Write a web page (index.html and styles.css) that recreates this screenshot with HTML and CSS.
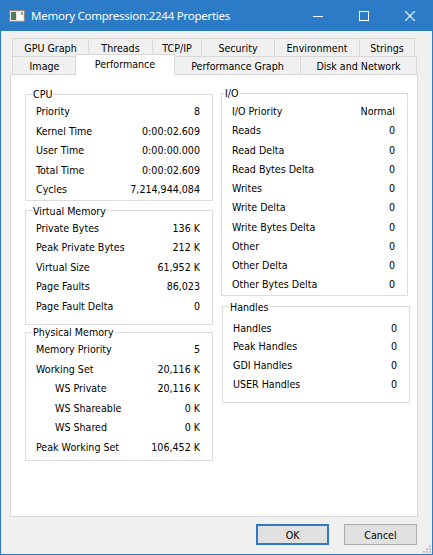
FILE: index.html
```html
<!DOCTYPE html>
<html>
<head>
<meta charset="utf-8">
<title>Memory Compression:2244 Properties</title>
<link rel="stylesheet" href="styles.css">
</head>
<body>
<div class="window">
  <div class="titlebar">
    <svg class="appicon" width="16" height="12" viewBox="0 0 16 12">
      <rect x="0.5" y="0.5" width="15" height="11" fill="#e6e6e6" stroke="#8a8a8a"/>
      <rect x="2" y="2" width="5" height="8" fill="#4d7a5c"/>
      <rect x="8" y="2" width="6" height="8" fill="#ffffff"/>
      <rect x="12" y="2" width="2" height="3" fill="#9c9c9c"/>
    </svg>
    <span class="title">Memory Compression:2244 Properties</span>
    <div class="caption-buttons">
      <span class="cbtn"><svg width="10" height="10" viewBox="0 0 10 10"><line x1="0" y1="5.5" x2="10" y2="5.5" stroke="#fff" stroke-width="1"/></svg></span>
      <span class="cbtn"><svg width="10" height="10" viewBox="0 0 10 10"><rect x="0.5" y="0.5" width="9" height="9" fill="none" stroke="#fff" stroke-width="1"/></svg></span>
      <span class="cbtn"><svg width="10" height="10" viewBox="0 0 10 10"><path d="M0 0 L10 10 M10 0 L0 10" stroke="#fff" stroke-width="1.1"/></svg></span>
    </div>
  </div>
  <div class="client">
    <div class="tabs">
      <div class="tabrow tabrow-back">
        <div class="tab">GPU Graph</div>
        <div class="tab">Threads</div>
        <div class="tab">TCP/IP</div>
        <div class="tab">Security</div>
        <div class="tab">Environment</div>
        <div class="tab">Strings</div>
      </div>
      <div class="tabrow tabrow-front">
        <div class="tab">Image</div>
        <div class="tab tab-active">Performance</div>
        <div class="tab">Performance Graph</div>
        <div class="tab">Disk and Network</div>
      </div>
    </div>
    <div class="panel">
      <div class="col col-left">
        <fieldset class="group g-cpu">
          <legend>CPU</legend>
          <div class="row"><span>Priority</span><span>8</span></div>
          <div class="row"><span>Kernel Time</span><span>0:00:02.609</span></div>
          <div class="row"><span>User Time</span><span>0:00:00.000</span></div>
          <div class="row"><span>Total Time</span><span>0:00:02.609</span></div>
          <div class="row"><span>Cycles</span><span>7,214,944,084</span></div>
        </fieldset>
        <fieldset class="group g-vm">
          <legend>Virtual Memory</legend>
          <div class="row"><span>Private Bytes</span><span>136 K</span></div>
          <div class="row"><span>Peak Private Bytes</span><span>212 K</span></div>
          <div class="row"><span>Virtual Size</span><span>61,952 K</span></div>
          <div class="row"><span>Page Faults</span><span>86,023</span></div>
          <div class="row"><span>Page Fault Delta</span><span>0</span></div>
        </fieldset>
        <fieldset class="group g-pm">
          <legend>Physical Memory</legend>
          <div class="row"><span>Memory Priority</span><span>5</span></div>
          <div class="row"><span>Working Set</span><span>20,116 K</span></div>
          <div class="row row-indent"><span>WS Private</span><span>20,116 K</span></div>
          <div class="row row-indent"><span>WS Shareable</span><span>0 K</span></div>
          <div class="row row-indent"><span>WS Shared</span><span>0 K</span></div>
          <div class="row"><span>Peak Working Set</span><span>106,452 K</span></div>
        </fieldset>
      </div>
      <div class="col col-right">
        <fieldset class="group g-io">
          <legend>I/O</legend>
          <div class="row"><span>I/O Priority</span><span>Normal</span></div>
          <div class="row"><span>Reads</span><span>0</span></div>
          <div class="row"><span>Read Delta</span><span>0</span></div>
          <div class="row"><span>Read Bytes Delta</span><span>0</span></div>
          <div class="row"><span>Writes</span><span>0</span></div>
          <div class="row"><span>Write Delta</span><span>0</span></div>
          <div class="row"><span>Write Bytes Delta</span><span>0</span></div>
          <div class="row"><span>Other</span><span>0</span></div>
          <div class="row"><span>Other Delta</span><span>0</span></div>
          <div class="row"><span>Other Bytes Delta</span><span>0</span></div>
        </fieldset>
        <fieldset class="group g-handles">
          <legend>Handles</legend>
          <div class="row"><span>Handles</span><span>0</span></div>
          <div class="row"><span>Peak Handles</span><span>0</span></div>
          <div class="row"><span>GDI Handles</span><span>0</span></div>
          <div class="row"><span>USER Handles</span><span>0</span></div>
        </fieldset>
      </div>
    </div>
    <div class="buttons">
      <button class="btn btn-default">OK</button>
      <button class="btn">Cancel</button>
    </div>
  </div>
  <svg class="grip" width="9" height="9" viewBox="0 0 9 9">
    <rect x="7" y="1" width="2" height="2" fill="#c6c6c6"/>
    <rect x="4" y="4" width="2" height="2" fill="#c6c6c6"/>
    <rect x="7" y="4" width="2" height="2" fill="#c6c6c6"/>
    <rect x="1" y="7" width="2" height="2" fill="#c6c6c6"/>
    <rect x="4" y="7" width="2" height="2" fill="#c6c6c6"/>
    <rect x="7" y="7" width="2" height="2" fill="#c6c6c6"/>
  </svg>
</div>
</body>
</html>
```
FILE: styles.css
```css
* { box-sizing: border-box; }
html, body { margin: 0; padding: 0; }
body {
  width: 433px;
  height: 555px;
  overflow: hidden;
  font-family: "DejaVu Sans Condensed", "DejaVu Sans", sans-serif;
  font-stretch: condensed;
  font-size: 10.6px;
  color: #000;
  background: #f0f0f0;
}
.window {
  position: relative;
  width: 433px;
  height: 555px;
  display: flex;
  flex-direction: column;
  background: #f0f0f0;
}
.titlebar {
  flex: none;
  height: 31px;
  background: #2b7bc7;
  color: #fff;
  display: flex;
  align-items: center;
  padding-left: 9px;
}
.appicon { flex: none; margin-right: 6px; }
.title {
  font-family: "Noto Sans", "Open Sans", sans-serif;
  font-stretch: normal;
  font-size: 11.5px;
  letter-spacing: -0.25px;
  white-space: nowrap;
}
.caption-buttons {
  margin-left: auto;
  align-self: stretch;
  display: flex;
}
.cbtn {
  width: 46px;
  display: flex;
  align-items: center;
  justify-content: center;
}
.client {
  flex: 1;
  border: 1px solid #2b7bc7;
  border-top: 0;
  padding-top: 7px;
}
.tabs { margin-left: 11px; }
.tabrow {
  display: grid;
  grid-template-rows: 18px;
}
.tabrow-back { grid-template-columns: 76px 64px 49px 73px 85px 56px; }
.tabrow-front { grid-template-columns: 64px 98px 126px 117px; }
.tab {
  border-top: 1px solid #d9d9d9;
  border-left: 1px solid #d9d9d9;
  background: #f0f0f0;
  display: flex;
  align-items: center;
  justify-content: center;
  padding-top: 1px;
  white-space: nowrap;
}
.tab:last-child { border-right: 1px solid #d9d9d9; }
.tab-active {
  position: relative;
  z-index: 1;
  align-self: end;
  height: 21px;
  margin: 0 -1px -1px;
  background: #fff;
  border-right: 1px solid #d9d9d9;
  padding-top: 0;
  padding-bottom: 2px;
}
.panel {
  margin-left: 9px;
  width: 408px;
  height: 443px;
  background: #fff;
  border: 1px solid #d9d9d9;
  display: flex;
  align-items: flex-start;
  gap: 8px;
  padding: 12px 0 0 14px;
}
.col-left { width: 188px; }
.col-right { width: 189px; margin-top: -1px; }
.group {
  margin: 0;
  padding: 0;
  border: 1px solid #dcdcdc;
  min-width: 0;
}
.group legend {
  padding: 0 1px;
  margin-left: 6px;
  line-height: 14px;
}
.row {
  display: flex;
  justify-content: space-between;
  padding: 0 12px 0 10px;
  line-height: 19.5px;
  white-space: nowrap;
}
.row-indent { padding-left: 29px; }
.g-cpu { padding: 1px 0 0; }
.g-vm { margin-top: 3px; padding: 1px 0 8px; }
.g-pm { padding: 1px 0 3px; }
.g-io { width: 187px; padding: 2px 0 0; }
.g-io legend { margin-left: 2px; }
.g-io .row { line-height: 19.25px; }
.g-handles { width: 188px; margin: 4px 0 0 1px; padding: 5px 0 8px; }
.g-handles .row { line-height: 18.75px; }
.buttons {
  display: flex;
  justify-content: flex-end;
  gap: 15px;
  margin: 7px 15px 0 0;
}
.btn {
  width: 73px;
  height: 21px;
  padding: 0;
  font: inherit;
  color: #000;
  background: #e1e1e1;
  border: 1px solid #adadad;
}
.btn-default { border: 2px solid #2f78c8; }
.grip {
  position: absolute;
  right: 2px;
  bottom: 2px;
}
```
